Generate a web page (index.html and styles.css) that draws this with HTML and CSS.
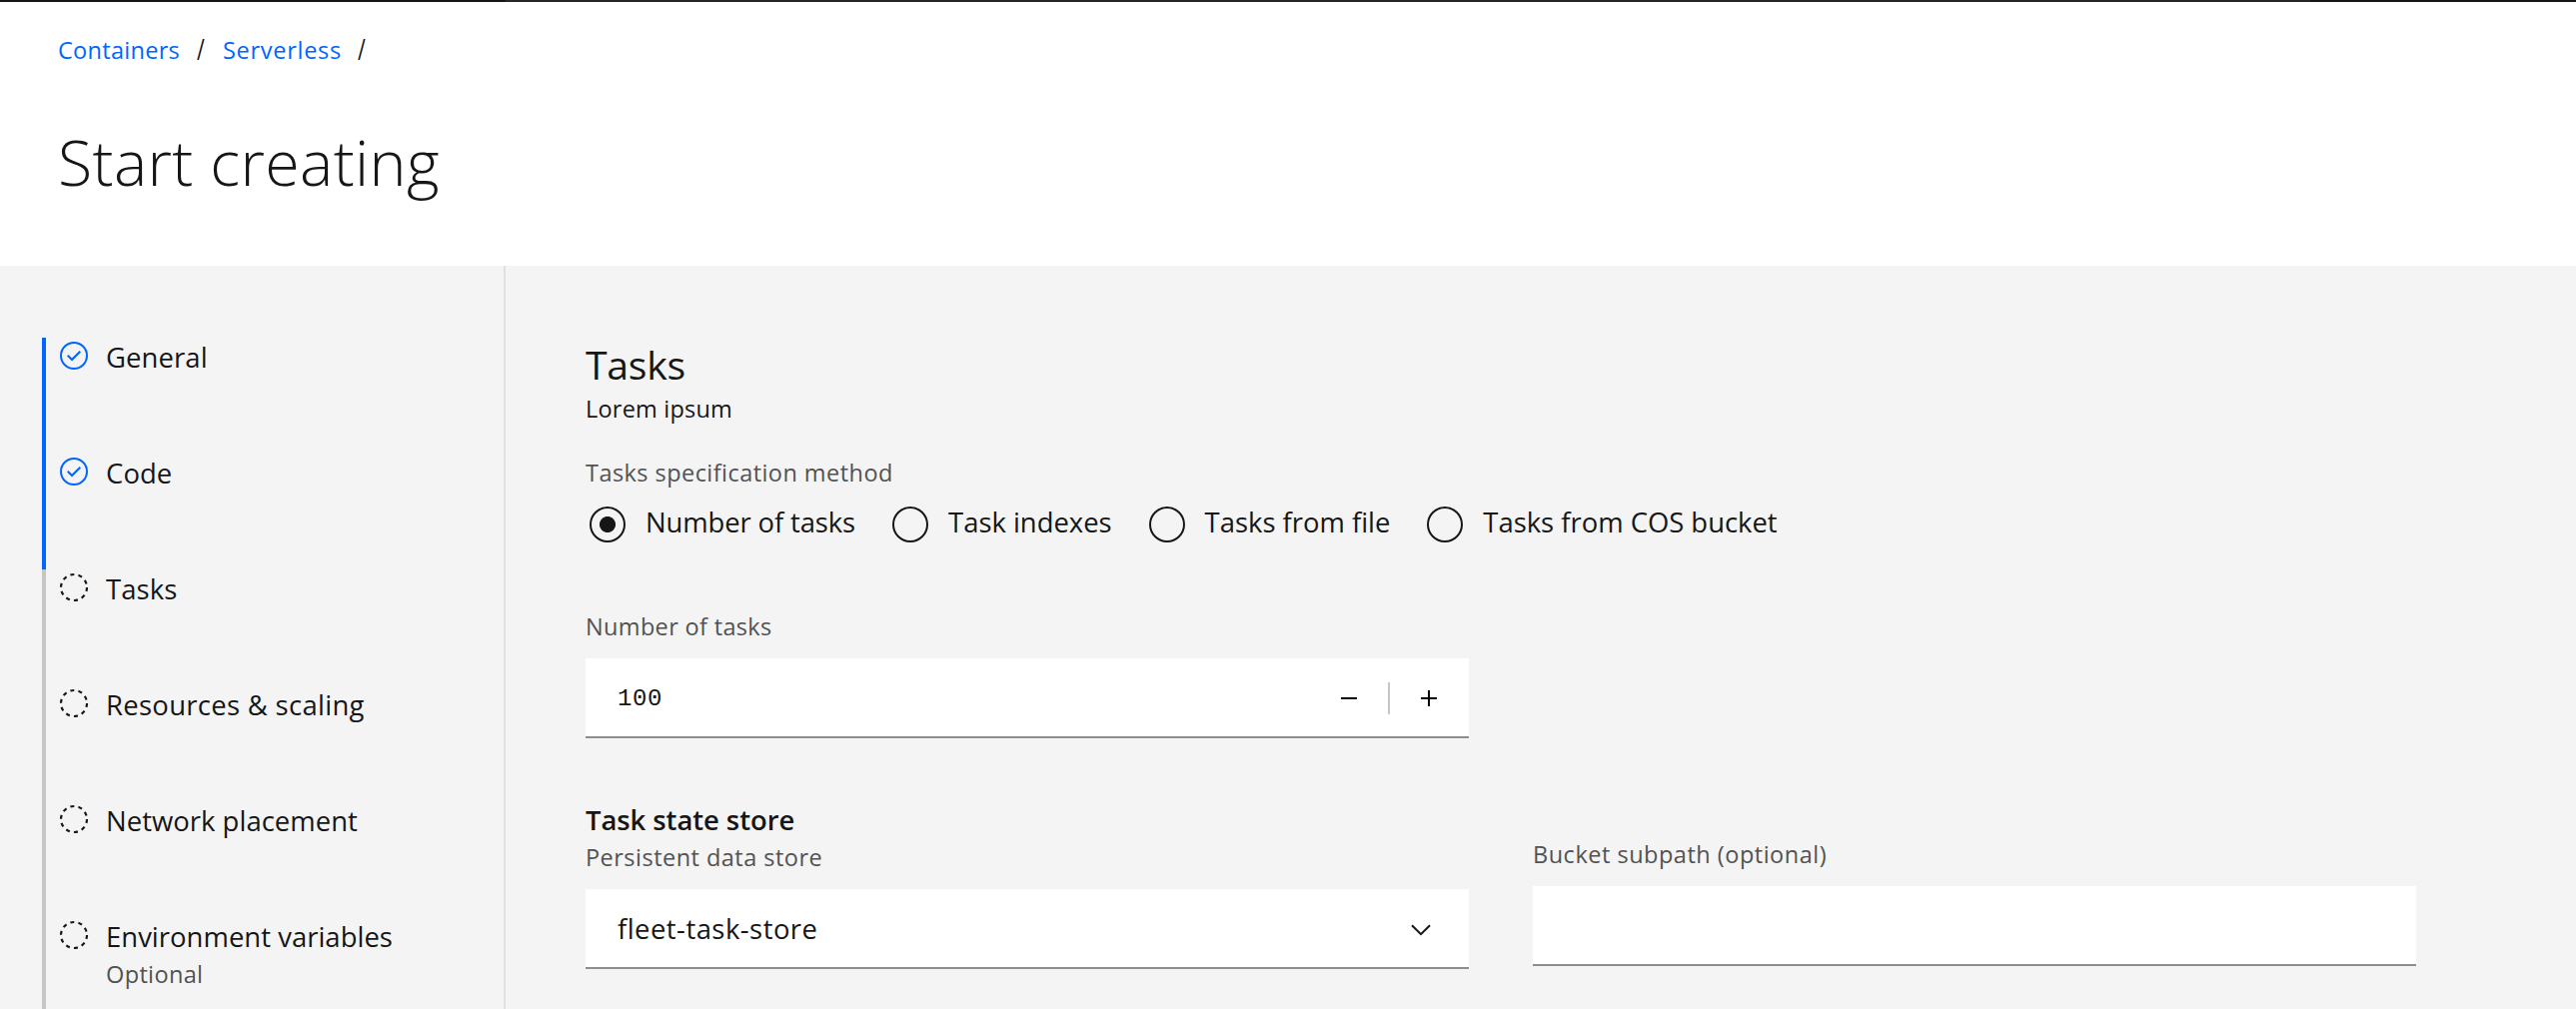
FILE: index.html
```html
<!DOCTYPE html>
<html lang="en">
<head>
<meta charset="utf-8">
<title>Start creating</title>
<link rel="stylesheet" href="styles.css">
</head>
<body>
<svg class="sprite" aria-hidden="true">
  <symbol id="complete" viewBox="0 0 32 32">
    <circle cx="16" cy="16" r="13" fill="none" stroke="currentColor" stroke-width="2"/>
    <path fill="currentColor" d="M14 21.414 9 16.413 10.413 15 14 18.586 21.585 11 23 12.415z"/>
  </symbol>
  <symbol id="incomplete" viewBox="0 0 32 32">
    <circle cx="16" cy="16" r="13" fill="none" stroke="currentColor" stroke-width="2.2" stroke-dasharray="4 4.168"/>
  </symbol>
</svg>
<div class="topbar"><span class="topbar-brand"></span><span class="topbar-search"></span></div>
<header class="page-header">
  <nav class="breadcrumb">
    <a class="crumb crumb-containers">Containers</a><span class="slash">/</span><a class="crumb crumb-serverless">Serverless</a><span class="slash">/</span>
  </nav>
  <h1 class="title">Start creating</h1>
</header>
<div class="body">
  <aside class="sidebar">
    <ol class="steps">
      <li class="step done"><svg class="step-icon"><use href="#complete"/></svg><div><div class="step-name">General</div></div></li>
      <li class="step done"><svg class="step-icon"><use href="#complete"/></svg><div><div class="step-name">Code</div></div></li>
      <li class="step"><svg class="step-icon"><use href="#incomplete"/></svg><div><div class="step-name">Tasks</div></div></li>
      <li class="step"><svg class="step-icon"><use href="#incomplete"/></svg><div><div class="step-name spaced">Resources &amp; scaling</div></div></li>
      <li class="step"><svg class="step-icon"><use href="#incomplete"/></svg><div><div class="step-name plain">Network placement</div></div></li>
      <li class="step"><svg class="step-icon"><use href="#incomplete"/></svg><div><div class="step-name plain">Environment variables</div><div class="step-note">Optional</div></div></li>
    </ol>
  </aside>
  <main class="main">
    <h2 class="section-title">Tasks</h2>
    <p class="section-text">Lorem ipsum</p>
    <div class="label method-label">Tasks specification method</div>
    <div class="radios">
      <div class="radio selected"><span class="radio-dot"></span><span class="radio-text">Number of tasks</span></div>
      <div class="radio"><span class="radio-dot"></span><span class="radio-text">Task indexes</span></div>
      <div class="radio"><span class="radio-dot"></span><span class="radio-text">Tasks from file</span></div>
      <div class="radio"><span class="radio-dot"></span><span class="radio-text">Tasks from COS bucket</span></div>
    </div>
    <div class="label count-label">Number of tasks</div>
    <div class="field number">
      <span class="number-value">100</span>
      <svg class="sign" viewBox="0 0 16 16"><path d="M0 7h16v2H0z"/></svg>
      <span class="divider"></span>
      <svg class="sign" viewBox="0 0 16 16"><path d="M0 7h7V0h2v7h7v2H9v7H7V9H0z"/></svg>
    </div>
    <div class="columns">
      <section>
        <h3 class="group-title">Task state store</h3>
        <div class="label store-label">Persistent data store</div>
        <div class="field select">
          <span class="select-value">fleet-task-store</span>
          <svg class="chevron" viewBox="0 0 20 12"><path d="M1 1.2 10 10.2 19 1.2" fill="none" stroke="currentColor" stroke-width="2"/></svg>
        </div>
      </section>
      <section class="subpath">
        <div class="label subpath-label">Bucket subpath (optional)</div>
        <div class="field"></div>
      </section>
    </div>
  </main>
</div>
</body>
</html>
```
FILE: styles.css
```css
* { box-sizing: border-box; }
body {
  margin: 0;
  height: 1010px;
  display: flex;
  flex-direction: column;
  overflow: hidden;
  background: #fff;
  color: #161616;
  font-family: "Open Sans", "Noto Sans", sans-serif;
  font-size: 27.44px;
  line-height: 36px;
  white-space: nowrap;
}
h1, h2, h3, p, ol { margin: 0; padding: 0; font-weight: 400; }
svg { display: block; flex: none; }
.sprite { display: none; }

.topbar { flex: none; display: flex; height: 2px; background: #161616; }
.topbar-brand { width: 506px; }
.topbar-search { width: 1806px; background: #262626; }

.page-header { flex: none; height: 264px; padding: 30px 58px 0; }
.breadcrumb { display: flex; font-size: 23.52px; }
.crumb { color: #0066ff; }
.crumb-containers { width: 139px; letter-spacing: .28px; }
.crumb-serverless { width: 135px; letter-spacing: .71px; }
.slash { width: 26px; transform: scale(.9, 1.2); transform-origin: 0 60%; }
.title { margin-top: 54px; font-size: 62.72px; line-height: 80px; font-weight: 300; letter-spacing: .37px; }

.body { flex: 1; min-height: 0; display: flex; background: #f4f4f4; }
.sidebar { width: 506px; padding: 72px 0 0 42px; border-right: 2px solid #e0e0e0; overflow: hidden; }
.steps { list-style: none; }
.step {
  display: flex;
  height: 116px;
  padding: 2px 0 0 12px;
  border-left: 4px solid #c6c6c6;
}
.done { border-color: #0066ff; }
.step-icon { width: 32px; height: 32px; margin-right: 16px; }
.done .step-icon { color: #0066ff; }
.step-name { letter-spacing: .1px; }
.spaced { letter-spacing: .31px; }
.plain { letter-spacing: .03px; }
.step-note { margin-top: 3px; font-size: 23.52px; line-height: 32px; letter-spacing: .35px; color: #525252; }

.main { padding: 71px 0 0 80px; }
.section-title { font-size: 39.2px; line-height: 56px; letter-spacing: -.28px; }
.section-text { font-size: 23.52px; line-height: 32px; letter-spacing: .2px; }
.label { font-size: 23.52px; line-height: 32px; color: #525252; }
.method-label { margin-top: 32px; letter-spacing: .44px; }
.radios { display: flex; gap: 37px; height: 39px; margin: 15px 0 68px 4px; }
.radio { display: flex; gap: 20px; }
.radio-text { padding-top: 1px; letter-spacing: -.02px; }
.selected .radio-text { letter-spacing: -.12px; }
.radio-dot { width: 36px; height: 36px; margin-top: 3px; border: 2px solid #161616; border-radius: 50%; }
.selected .radio-dot { background: radial-gradient(circle, #161616 7.6px, transparent 8.4px); }
.count-label { letter-spacing: .33px; }

.field {
  display: flex;
  align-items: center;
  width: 884px;
  height: 80px;
  margin-top: 16px;
  padding-left: 32px;
  background: #fff;
  border-bottom: 2px solid #8d8d8d;
}
.number { padding-right: 32px; gap: 31px; }
.number-value { flex: 1; padding-top: 4px; font-family: "Liberation Mono", monospace; font-size: 24px; letter-spacing: .64px; }
.sign { width: 16px; height: 16px; margin-top: 2px; }
.divider { width: 2px; height: 32px; margin-top: 2px; background: #c6c6c6; }

.columns { display: flex; gap: 64px; margin-top: 63px; }
.group-title { padding-top: 1px; font-size: 27.44px; font-weight: 600; letter-spacing: -.06px; }
.store-label { margin-top: 3px; letter-spacing: .47px; }
.select { justify-content: space-between; padding-right: 38px; }
.select-value { padding-top: 2px; letter-spacing: .47px; }
.chevron { width: 20px; height: 12px; margin-top: 3px; }
.subpath { padding-top: 37px; }
.subpath-label { letter-spacing: .5px; }
```
